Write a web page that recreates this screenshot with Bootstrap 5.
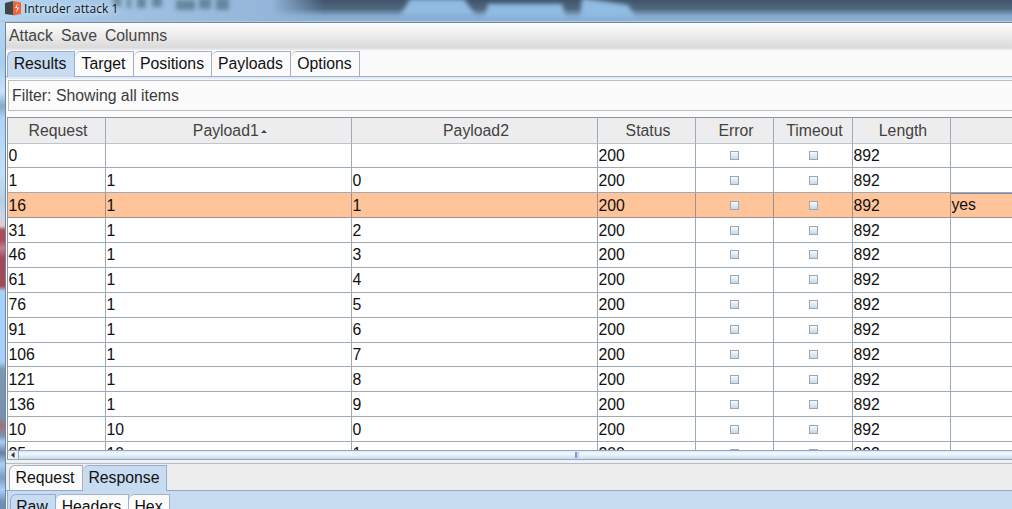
<!DOCTYPE html>
<html lang="en">
<head>
<meta charset="utf-8">
<title>Intruder attack 1</title>
<link rel="stylesheet" href="https://cdn.jsdelivr.net/npm/bootstrap@5.3.0/dist/css/bootstrap.min.css">
<script src="https://cdn.jsdelivr.net/npm/bootstrap@5.3.0/dist/js/bootstrap.bundle.min.js"></script>
<style>
  body { font: 15.8px/20px "Liberation Sans", Arial, sans-serif; color: #111; height: 509px; }
  .desk { height: 509px; background: #a9cdee; }
  .titlebar { height: 22px; }
  .backdrop { left: 0; top: 0; }
  .titlebar .caption { font: 12px/18px "Open Sans", "Noto Sans", sans-serif; color: #0b1420; letter-spacing: .07px; text-shadow: 0 0 5px #dcecfb, 0 0 7px #dcecfb; margin-left: 3px; }
  .edge { width: 5px; filter: blur(.4px);
    background: linear-gradient(#b4d5f0 0, #a9cdec 40px, #c9e2f8 70px, #88a9c6 84px, #add2f2 96px, #c3e0fa 150px, #b4cfe4 180px, #c9d7e4 192px, #dacdd4 204px, #a54e5c 208px, #a54e5c 218px, #c0808c 226px, #a04a58 236px, #a04a58 264px, #a9d0fa 269px, #a9d0fa 340px, #7f98b0 347px, #7890aa 395px, #a0707c 404px, #7a94ae 414px, #a9d0f8 420px, #66809e 431px, #a9d0f8 442px, #7c9cc0 456px, #a9d0f8 468px, #6f8fb4 480px); }
  .frame { border-left: 1px solid #74849f; border-top: 1px solid #76899f; background: #fbfbfc; }
  .menus { height: 27px; padding: 3px 0 0 3px; gap: 8px; color: #444; background: linear-gradient(#fdfdfd, #dadada 25px, #ececec 25px, #d8d8d8 26px); border-bottom: 1px solid #e8e8e8; }
  .strip { align-items: flex-end; border-bottom: 1px solid #9aafcc; }
  .strip-top { height: 27px; padding-left: 1px; }
  .tb { height: 25px; line-height: 24px; background: #fbfbfc; border: 1px solid #a3b1c6; border-width: 1px 1px 0 0; text-align: center; border-top-left-radius: 6px; flex: none; white-space: nowrap; padding-right: 1px; }
  .tb:first-child { border-left-width: 1px; padding-right: 2px; }
  .tb.on { background: #c8dcf1; border-color: #98acd0; height: 26px; margin-bottom: -1px; }
  .filterbox { height: 31px; margin: 1px 0 0 2px; padding: 5px 0 0 3px; border: 1px solid #bcbcbe; border-right: 0; color: #3b3b3b; }
  .grid-wrap { margin: 6px 0 0 1px; height: 333px; border-left: 1px solid #8795a6; border-top: 1px solid #8795a6; background: #fff; }
  .gr { display: grid; grid-template-columns: 98px 246px 246px 98px 78px 79px 98px 61px; height: 24.88px; }
  .gr > div { border-right: 1px solid #9eabb7; border-bottom: 1px solid #9eabb7; padding: .4px 0 0 .4px; line-height: 23px; white-space: nowrap; }
  .gr > div:last-child { border-right: 0; }
  .gr.head { height: 25.5px; color: #424242; background: #ededed; }
  .gr.head > div { text-align: center; padding-left: 3px; padding-top: 1px; border-bottom-color: #bcc5cd; }
  .gr.hit { background: #ffc499; }
  .gr.hit > div { border-color: #9d9290; }
  .gr.hit > div:last-child { border-top: 1px solid #7f87a3; padding-top: 0; line-height: 22px; }
  .gr .tick { display: flex; justify-content: center; align-items: center; padding: 0; }
  .tick i { width: 9px; height: 9px; border: 1px solid #98a8b9; background: linear-gradient(#f6fafd, #c8d9e9); }
  .scroller { height: 10px; margin-left: 1px; border: 1px solid #8fa6c6; border-left-color: #8795a6; border-right: 0; background: #eee; }
  .scroller .knob { border-left: 1px solid #8fa6c6; background: linear-gradient(#dbe8f4, #f3f8fd 35%, #c9daeb); }
  .grip { width: 4px; height: 6px; margin-left: 556px; background: linear-gradient(90deg, #8398cb 2px, #c4d2ea 2px); }
  .splitter { height: 4px; background: #eef0f1; border-bottom: 1px solid #b5bcc2; }
  .strip-mid { height: 27px; padding-left: 3px; background: #ededed; border-bottom-color: #93a8cd; }
  .lower { background: #c8dcf1; padding: 3px 0 0 2px; border-left: 1px solid #93a8cd; margin-left: 1px; }
</style>
</head>
<body class="m-0 overflow-hidden">
<div class="desk d-flex flex-column position-relative overflow-hidden">
  <header class="titlebar position-relative flex-shrink-0">
    <svg class="backdrop position-absolute" width="1012" height="22" viewBox="0 0 1012 22" aria-hidden="true">
      <defs>
        <linearGradient id="dark" x1="0" y1="0" x2="0" y2="1"><stop offset="0" stop-color="#40546a"/><stop offset=".4" stop-color="#50687f"/><stop offset=".72" stop-color="#84a7cb"/><stop offset="1" stop-color="#8fb2d8"/></linearGradient>
        <linearGradient id="sky" x1="0" y1="0" x2="1" y2="0"><stop offset="0" stop-color="#b5d5ef"/><stop offset=".3" stop-color="#a0c1e1"/><stop offset="1" stop-color="#88acd3"/></linearGradient>
        <filter id="soft" x="-20%" y="-80%" width="140%" height="260%"><feGaussianBlur stdDeviation="2.2"/></filter>
        <linearGradient id="fade" gradientUnits="userSpaceOnUse" x1="0" x2="1012"><stop offset="0" stop-color="#fff"/><stop offset=".268" stop-color="#fff"/><stop offset=".32" stop-color="#000"/></linearGradient>
        <mask id="left" maskUnits="userSpaceOnUse" x="0" y="0" width="1012" height="22"><rect width="1012" height="22" fill="url(#fade)"/></mask>
      </defs>
      <rect width="1012" height="22" fill="url(#dark)"/>
      <rect width="400" height="22" fill="url(#sky)" mask="url(#left)"/>
      <g filter="url(#soft)">
        <path d="M410-1H464L476 16H400ZM488 4H562L566 18H484ZM582-2L628 5L636 18H580Z" fill="#90bbe2"/>
        <path d="M113-3H121V7H113ZM127-3H131V8H127ZM137-3H146V8H137ZM152-3H162V7H152ZM176 0H195V10H176ZM199-2H211V9H199ZM216-2H229V10H216Z" fill="#66879f"/>
      </g>
      <rect y="21" width="1012" height="1" fill="#a9c6e4"/>
    </svg>
    <div class="position-relative d-flex ps-1">
      <svg width="17" height="17" viewBox="0 0 17 17" aria-hidden="true"><path d="M1 3L9 1V15L1 14Z" fill="#414449"/><path d="M9 1L17 2.5V14L9 15.6Z" fill="#ef6339"/><path d="M13.8 3L11 8H13.2L11.8 13L15.2 7.6H12.8Z" fill="#ffe9e0"/></svg>
      <span class="caption">Intruder attack 1</span>
    </div>
  </header>
  <div class="d-flex flex-grow-1">
    <div class="edge flex-shrink-0"></div>
    <main class="frame flex-grow-1 overflow-hidden">
      <nav class="menus d-flex"><span>Attack</span><span>Save</span><span>Columns</span></nav>
      <div class="strip strip-top d-flex">
        <div class="tb on" style="width:68px">Results</div><div class="tb" style="width:59px">Target</div><div class="tb" style="width:78px">Positions</div><div class="tb" style="width:79px">Payloads</div><div class="tb" style="width:69px">Options</div>
      </div>
      <div style="height:2px;background:#dfebf6"></div>
      <div class="filterbox">Filter: Showing all items</div>
      <section class="grid-wrap overflow-hidden" id="results">
        <div class="gr head"><div>Request</div><div>Payload1 <svg width="6" height="8" viewBox="0 0 6 8" style="margin-left:-2px"><path d="M0 5L3 2L6 5Z" fill="#34485c"/></svg></div><div>Payload2</div><div>Status</div><div>Error</div><div>Timeout</div><div>Length</div><div></div></div>
      </section>
      <div class="scroller d-flex">
        <svg width="10" height="8" viewBox="0 0 10 8" class="flex-shrink-0"><path d="M6.5 1V7L3 4Z" fill="#333"/></svg>
        <div class="knob flex-grow-1 d-flex align-items-center"><div class="grip"></div></div>
      </div>
      <div class="splitter"></div>
      <div class="strip strip-mid d-flex">
        <div class="tb" style="width:74px">Request</div><div class="tb on" style="width:84px">Response</div>
      </div>
      <div class="lower">
        <div class="d-flex"><div class="tb on" style="width:46px">Raw</div><div class="tb" style="width:73px">Headers</div><div class="tb" style="width:41px">Hex</div></div>
      </div>
    </main>
  </div>
</div>
<script>
  const rows = [[0,'',''],[1,1,0],[16,1,1],[31,1,2],[46,1,3],[61,1,4],[76,1,5],[91,1,6],[106,1,7],[121,1,8],[136,1,9],[10,10,0],[25,10,1]];
  document.getElementById('results').insertAdjacentHTML('beforeend', rows.map(([id, a, b]) =>
    `<div class="gr${id === 16 ? ' hit' : ''}"><div>${id}</div><div>${a}</div><div>${b}</div><div>200</div><div class="tick"><i></i></div><div class="tick"><i></i></div><div>892</div><div>${id === 16 ? 'yes' : ''}</div></div>`).join(''));
</script>
</body>
</html>
